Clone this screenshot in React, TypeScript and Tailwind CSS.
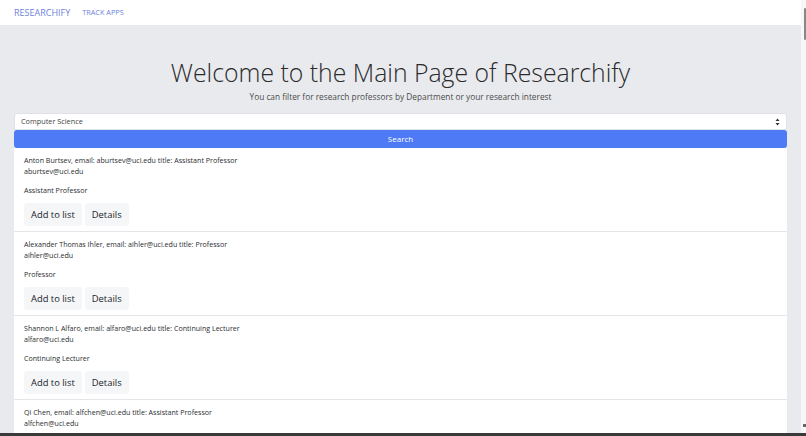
import React from "react";

const professors = [
  { name: "Anton Burtsev", email: "aburtsev@uci.edu", title: "Assistant Professor" },
  { name: "Alexander Thomas Ihler", email: "aihler@uci.edu", title: "Professor" },
  { name: "Shannon L Alfaro", email: "alfaro@uci.edu", title: "Continuing Lecturer" },
  { name: "Qi Chen", email: "alfchen@uci.edu", title: "Assistant Professor" },
];

function ProfessorItem({ p }: { p: (typeof professors)[number] }) {
  return (
    <div className="h-[84px] shrink-0 border-b border-[#e3e5e8] px-[10px] pt-[7px] text-[7.1px] leading-[11px] text-[#2a2d31]">
      <div>
        {p.name}, email: {p.email} title: {p.title}
      </div>
      <div>{p.email}</div>
      <div className="mt-[8px]">{p.title}</div>
      <div className="mt-[7px] flex gap-[3px]">
        <button className="h-[23px] rounded-[3px] bg-[#f5f6f8] px-[7px] text-[9.4px] text-[#212529]">
          Add to list
        </button>
        <button className="h-[23px] rounded-[3px] bg-[#f5f6f8] px-[7px] text-[9.4px] text-[#212529]">
          Details
        </button>
      </div>
    </div>
  );
}

export default function App() {
  return (
    <div
      className="flex h-[436px] w-[806px] flex-col overflow-hidden bg-white"
      style={{ fontFamily: '"Open Sans", "Noto Sans", sans-serif' }}
    >
      <div className="flex min-h-0 flex-1">
        <div className="flex min-w-0 flex-1 flex-col">
          <nav className="flex h-[25px] shrink-0 items-center gap-[12px] px-[14px]">
            <span className="text-[9px] text-[#6f7fdc]">RESEARCHIFY</span>
            <span className="text-[7.3px] text-[#6f7fdc]">TRACK APPS</span>
          </nav>
          <main className="flex min-h-0 flex-1 flex-col bg-[#e9eaee] px-[14px]">
            <h1 className="mt-[30px] text-center text-[24.8px] font-light leading-[34px] text-[#2b2b2b]">
              Welcome to the Main Page of Researchify
            </h1>
            <p className="mt-[2px] text-center text-[8.3px] leading-[12px] text-[#4a4a4a]">
              You can filter for research professors by Department or your research interest
            </p>
            <div className="mt-[10px] flex h-[17px] items-center justify-between rounded-t-[3px] border border-[#dfe2e6] bg-white pl-[6px] pr-[6px] text-[7.3px] text-[#444]">
              <span>Computer Science</span>
              <svg width="5" height="8" viewBox="0 0 5 8">
                <path d="M2.5 0.5 L4.5 3 L0.5 3 Z M2.5 7.5 L4.5 5 L0.5 5 Z" fill="#333" />
              </svg>
            </div>
            <button className="h-[18px] rounded-[3px] bg-[#4e7bf5] text-[8px] text-white">
              Search
            </button>
            <div className="flex min-h-0 flex-1 flex-col overflow-hidden bg-white">
              {professors.map((p) => (
                <ProfessorItem key={p.email} p={p} />
              ))}
            </div>
          </main>
        </div>
        <div className="relative w-[5px] shrink-0 bg-[#f7f7f7]">
          <div className="absolute left-[3px] top-[8px] h-[32px] w-[2px] rounded-full bg-[#888]" />
          <div className="absolute bottom-[6px] left-[2px] h-[3px] w-[3px] bg-[#666]" />
        </div>
      </div>
      <div className="h-[3px] shrink-0 bg-[#3a3a3a]" />
    </div>
  );
}
